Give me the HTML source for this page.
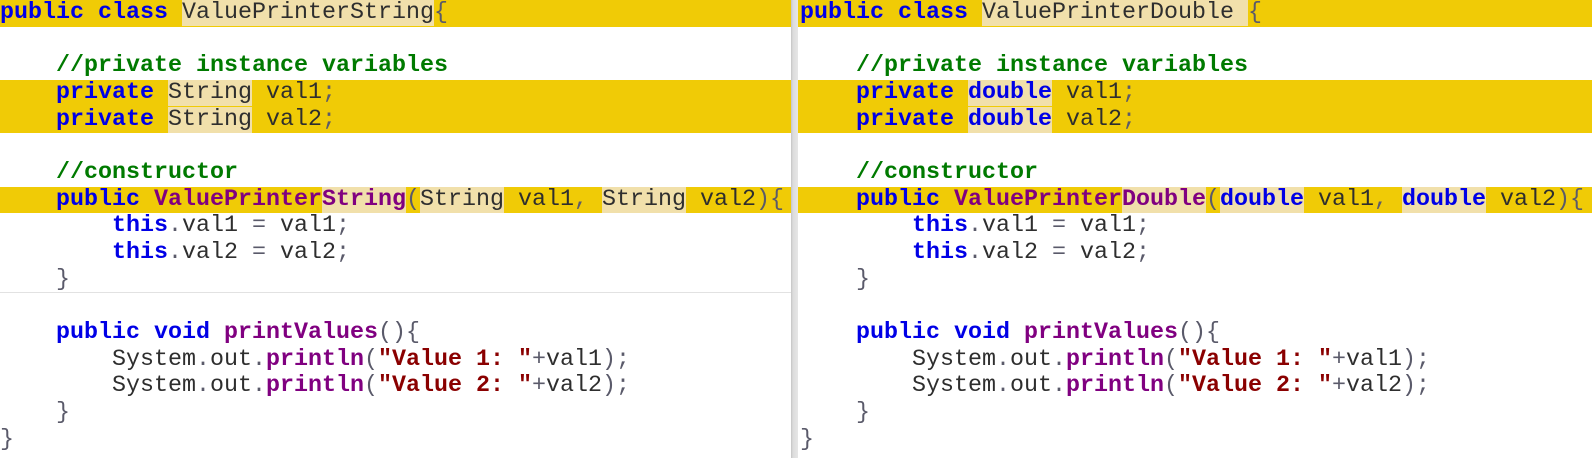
<!DOCTYPE html>
<html><head><meta charset="utf-8"><style>
html,body{margin:0;padding:0;background:#fff;width:1592px;height:458px;overflow:hidden}
.pane{position:absolute;top:0;height:458px;font-family:"Liberation Mono",monospace;font-size:23.33px;line-height:26.67px;color:#2e2e2e;white-space:pre}
#l{left:0;width:791px}
#r{left:798px;width:794px;padding-left:2px;box-sizing:border-box}
#div{position:absolute;left:791px;width:7px;top:0;height:458px;background:linear-gradient(90deg,#c4c4c4 0,#dcdcdc 2px,#e6e6e6 100%)}
#hr{position:absolute;left:0;top:292px;width:791px;height:1px;background:#e2e2e2}
.ln{height:26.67px}
.y{background:#f0cb06}
.pane .y{margin-left:-2px;padding-left:2px}
#l .y{margin-left:0;padding-left:0}
.t{background:#f1e0ab}
.k{color:#0000e6;font-weight:bold}
.m{color:#800080;font-weight:bold}
.s{color:#8a0000;font-weight:bold}
.c{color:#007a00;font-weight:bold}
.p{color:#5a5a6a}
</style></head><body>
<div id="hr"></div>
<div class="pane" id="l"><div class="ln y"><span class="k">public class</span> <span class="t">ValuePrinterString</span><span class="p">{</span></div><div class="ln"> </div><div class="ln">    <span class="c">//private instance variables</span></div><div class="ln y">    <span class="k">private</span> <span class="t">String</span> val1<span class="p">;</span></div><div class="ln y">    <span class="k">private</span> <span class="t">String</span> val2<span class="p">;</span></div><div class="ln"> </div><div class="ln">    <span class="c">//constructor</span></div><div class="ln y">    <span class="k">public</span> <span class="m">ValuePrinter</span><span class="m t">String</span><span class="p">(</span><span class="t">String</span> val1<span class="p">,</span> <span class="t">String</span> val2<span class="p">){</span></div><div class="ln">        <span class="k">this</span><span class="p">.</span>val1 <span class="p">=</span> val1<span class="p">;</span></div><div class="ln">        <span class="k">this</span><span class="p">.</span>val2 <span class="p">=</span> val2<span class="p">;</span></div><div class="ln">    <span class="p">}</span></div><div class="ln"> </div><div class="ln">    <span class="k">public void</span> <span class="m">printValues</span><span class="p">(){</span></div><div class="ln">        System<span class="p">.</span>out<span class="p">.</span><span class="m">println</span><span class="p">(</span><span class="s">"Value 1: "</span><span class="p">+</span>val1<span class="p">);</span></div><div class="ln">        System<span class="p">.</span>out<span class="p">.</span><span class="m">println</span><span class="p">(</span><span class="s">"Value 2: "</span><span class="p">+</span>val2<span class="p">);</span></div><div class="ln">    <span class="p">}</span></div><div class="ln"><span class="p">}</span></div></div>
<div id="div"></div>
<div class="pane" id="r"><div class="ln y"><span class="k">public class</span> <span class="t">ValuePrinterDouble </span><span class="p">{</span></div><div class="ln"> </div><div class="ln">    <span class="c">//private instance variables</span></div><div class="ln y">    <span class="k">private</span> <span class="k t">double</span> val1<span class="p">;</span></div><div class="ln y">    <span class="k">private</span> <span class="k t">double</span> val2<span class="p">;</span></div><div class="ln"> </div><div class="ln">    <span class="c">//constructor</span></div><div class="ln y">    <span class="k">public</span> <span class="m">ValuePrinter</span><span class="m t">Double</span><span class="p">(</span><span class="k t">double</span> val1<span class="p">,</span> <span class="k t">double</span> val2<span class="p">){</span></div><div class="ln">        <span class="k">this</span><span class="p">.</span>val1 <span class="p">=</span> val1<span class="p">;</span></div><div class="ln">        <span class="k">this</span><span class="p">.</span>val2 <span class="p">=</span> val2<span class="p">;</span></div><div class="ln">    <span class="p">}</span></div><div class="ln"> </div><div class="ln">    <span class="k">public void</span> <span class="m">printValues</span><span class="p">(){</span></div><div class="ln">        System<span class="p">.</span>out<span class="p">.</span><span class="m">println</span><span class="p">(</span><span class="s">"Value 1: "</span><span class="p">+</span>val1<span class="p">);</span></div><div class="ln">        System<span class="p">.</span>out<span class="p">.</span><span class="m">println</span><span class="p">(</span><span class="s">"Value 2: "</span><span class="p">+</span>val2<span class="p">);</span></div><div class="ln">    <span class="p">}</span></div><div class="ln"><span class="p">}</span></div></div>
</body></html>
